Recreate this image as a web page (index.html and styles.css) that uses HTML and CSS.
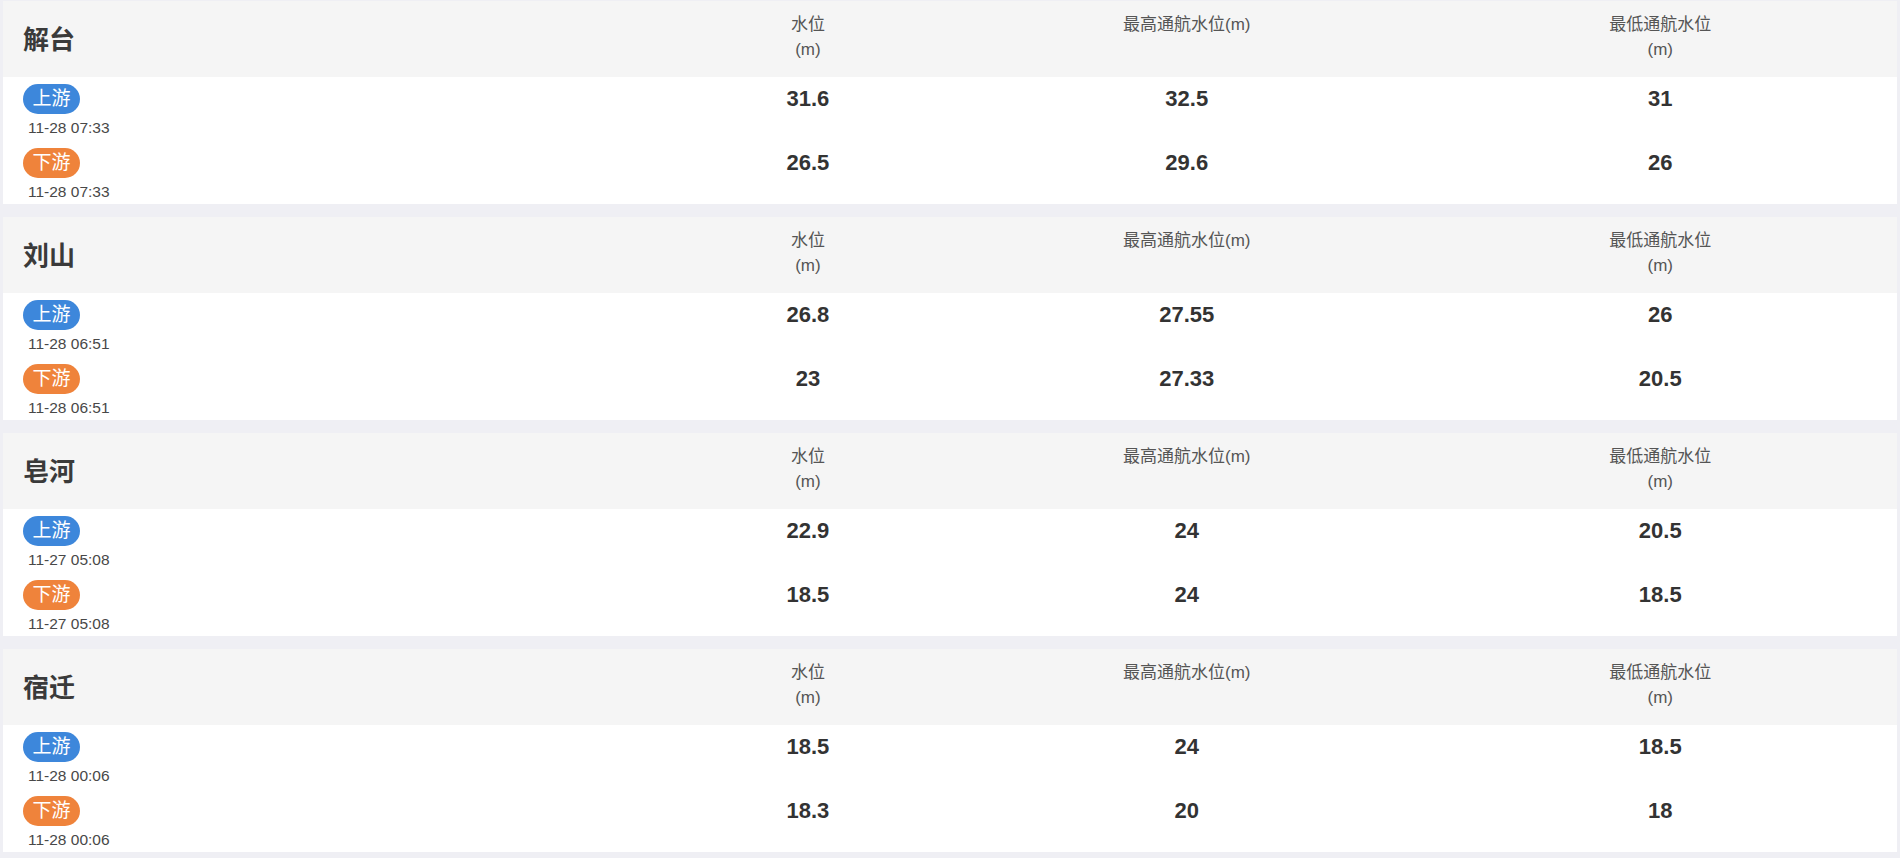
FILE: index.html
```html
<!DOCTYPE html>
<html lang="zh-CN">
<head>
<meta charset="utf-8">
<title>水位</title>
<link rel="stylesheet" href="styles.css">
</head>
<body>
<div class="list">
  <section class="card">
    <div class="head">
      <div class="name">解台</div>
      <div class="col">水位<br>(m)</div>
      <div class="col">最高通航水位(m)</div>
      <div class="col">最低通航水位<br>(m)</div>
    </div>
    <div class="body">
      <div class="row">
        <div class="loc"><span class="tag up">上游</span><div class="time">11-28 07:33</div></div>
        <div class="val">31.6</div><div class="val">32.5</div><div class="val">31</div>
      </div>
      <div class="row">
        <div class="loc"><span class="tag down">下游</span><div class="time">11-28 07:33</div></div>
        <div class="val">26.5</div><div class="val">29.6</div><div class="val">26</div>
      </div>
    </div>
  </section>
  <section class="card">
    <div class="head">
      <div class="name">刘山</div>
      <div class="col">水位<br>(m)</div>
      <div class="col">最高通航水位(m)</div>
      <div class="col">最低通航水位<br>(m)</div>
    </div>
    <div class="body">
      <div class="row">
        <div class="loc"><span class="tag up">上游</span><div class="time">11-28 06:51</div></div>
        <div class="val">26.8</div><div class="val">27.55</div><div class="val">26</div>
      </div>
      <div class="row">
        <div class="loc"><span class="tag down">下游</span><div class="time">11-28 06:51</div></div>
        <div class="val">23</div><div class="val">27.33</div><div class="val">20.5</div>
      </div>
    </div>
  </section>
  <section class="card">
    <div class="head">
      <div class="name">皂河</div>
      <div class="col">水位<br>(m)</div>
      <div class="col">最高通航水位(m)</div>
      <div class="col">最低通航水位<br>(m)</div>
    </div>
    <div class="body">
      <div class="row">
        <div class="loc"><span class="tag up">上游</span><div class="time">11-27 05:08</div></div>
        <div class="val">22.9</div><div class="val">24</div><div class="val">20.5</div>
      </div>
      <div class="row">
        <div class="loc"><span class="tag down">下游</span><div class="time">11-27 05:08</div></div>
        <div class="val">18.5</div><div class="val">24</div><div class="val">18.5</div>
      </div>
    </div>
  </section>
  <section class="card">
    <div class="head">
      <div class="name">宿迁</div>
      <div class="col">水位<br>(m)</div>
      <div class="col">最高通航水位(m)</div>
      <div class="col">最低通航水位<br>(m)</div>
    </div>
    <div class="body">
      <div class="row">
        <div class="loc"><span class="tag up">上游</span><div class="time">11-28 00:06</div></div>
        <div class="val">18.5</div><div class="val">24</div><div class="val">18.5</div>
      </div>
      <div class="row">
        <div class="loc"><span class="tag down">下游</span><div class="time">11-28 00:06</div></div>
        <div class="val">18.3</div><div class="val">20</div><div class="val">18</div>
      </div>
    </div>
  </section>
</div>
</body>
</html>
```
FILE: styles.css
```css
html, body {
  margin: 0;
  padding: 0;
  background: #efeff4;
}
body {
  font-family: "Liberation Sans", Arial, "Noto Sans CJK SC", sans-serif;
  color: #333;
}
.list {
  padding: 1px 3px 0;
  display: flex;
  flex-direction: column;
  gap: 13px;
}
.head, .row {
  display: grid;
  grid-template-columns: 35% 15% 25% 25%;
}
.head {
  background: #f5f5f5;
  height: 76px;
}
.name {
  display: flex;
  align-items: center;
  padding-left: 20px;
  padding-bottom: 4px;
  font-size: 26px;
  font-weight: bold;
  color: #3a3a3a;
}
.col {
  text-align: center;
  padding-top: 11px;
  font-size: 17px;
  line-height: 25px;
  color: #555;
}
.body {
  background: #fff;
  padding: 7px 0 2px;
  display: flex;
  flex-direction: column;
  gap: 10px;
}
.loc {
  padding-left: 20px;
}
.tag {
  display: inline-block;
  height: 30px;
  line-height: 30px;
  padding: 0 9.5px;
  border-radius: 15px;
  font-size: 19px;
  color: #fff;
  vertical-align: top;
}
.tag.up { background: #3d87db; }
.tag.down { background: #ef833b; }
.time {
  margin-top: 4px;
  padding-left: 5px;
  font-size: 15.5px;
  line-height: 20px;
  color: #484848;
}
.val {
  text-align: center;
  font-size: 22px;
  line-height: 30px;
  font-weight: bold;
  color: #333;
}
```
